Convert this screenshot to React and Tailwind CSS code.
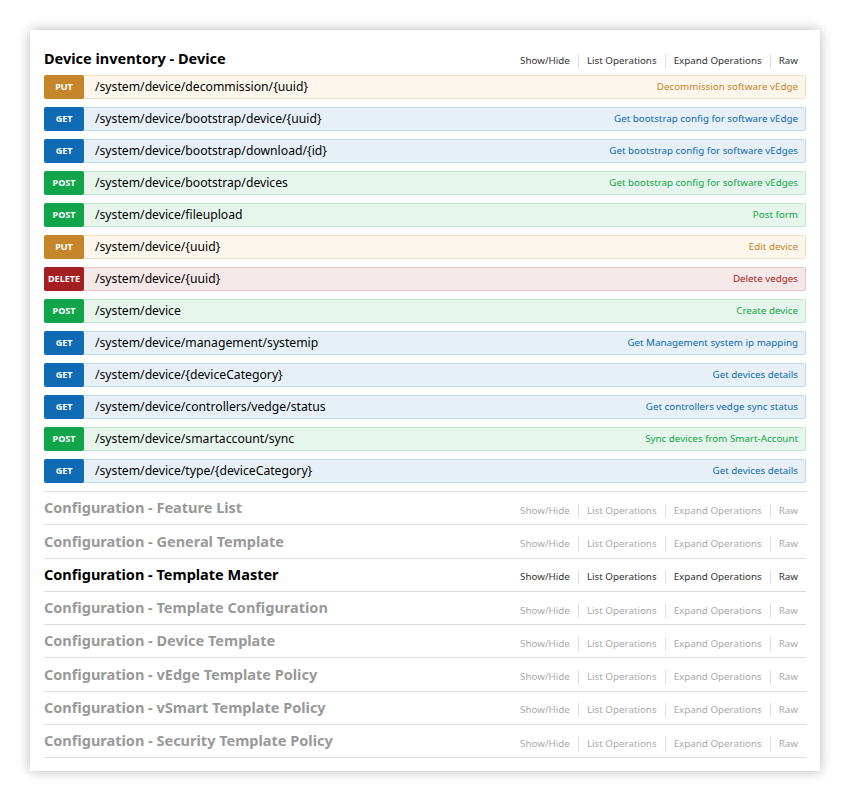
const ops = [
  ['PUT', '/system/device/decommission/{uuid}', 'Decommission software vEdge'],
  ['GET', '/system/device/bootstrap/device/{uuid}', 'Get bootstrap config for software vEdge'],
  ['GET', '/system/device/bootstrap/download/{id}', 'Get bootstrap config for software vEdges'],
  ['POST', '/system/device/bootstrap/devices', 'Get bootstrap config for software vEdges'],
  ['POST', '/system/device/fileupload', 'Post form'],
  ['PUT', '/system/device/{uuid}', 'Edit device'],
  ['DELETE', '/system/device/{uuid}', 'Delete vedges'],
  ['POST', '/system/device', 'Create device'],
  ['GET', '/system/device/management/systemip', 'Get Management system ip mapping'],
  ['GET', '/system/device/{deviceCategory}', 'Get devices details'],
  ['GET', '/system/device/controllers/vedge/status', 'Get controllers vedge sync status'],
  ['POST', '/system/device/smartaccount/sync', 'Sync devices from Smart-Account'],
  ['GET', '/system/device/type/{deviceCategory}', 'Get devices details'],
];

const styles = {
  GET: { row: 'bg-[#e7f0f7] border-[#c3d9ec]', badge: 'bg-[#0f6ab4] border-[#0f6ab4]', text: 'text-[#0f6ab4]' },
  POST: { row: 'bg-[#e7f6ec] border-[#c3e8d1]', badge: 'bg-[#10a54a] border-[#10a54a]', text: 'text-[#10a54a]' },
  PUT: { row: 'bg-[#fcf6ed] border-[#f0e1c5]', badge: 'bg-[#c5862b] border-[#c5862b]', text: 'text-[#c5862b]' },
  DELETE: { row: 'bg-[#f5e8e8] border-[#e8c6c7]', badge: 'bg-[#a41e22] border-[#a41e22]', text: 'text-[#a41e22]' },
};

const sections = [
  ['Configuration - Feature List', false],
  ['Configuration - General Template', false],
  ['Configuration - Template Master', true],
  ['Configuration - Template Configuration', false],
  ['Configuration - Device Template', false],
  ['Configuration - vEdge Template Policy', false],
  ['Configuration - vSmart Template Policy', false],
  ['Configuration - Security Template Policy', false],
];

function Links({ active }) {
  const items = ['Show/Hide', 'List Operations', 'Expand Operations', 'Raw'];
  return (
    <ul className={`flex items-center mt-[5px] text-[9.8px] ${active ? 'text-[#333]' : 'text-[#aaa]'}`}>
      {items.map((it, i) => (
        <li key={it} className={`px-[8px] leading-[14px] ${i > 0 ? 'border-l border-[#ddd]' : ''} ${i === items.length - 1 ? 'pr-0' : ''}`}>
          {it}
        </li>
      ))}
    </ul>
  );
}

function Row({ method, path, summary }) {
  const s = styles[method];
  return (
    <li className={`flex h-6 mb-2 border rounded-[2px] ${s.row}`}>
      <span className={`w-[40px] -m-px h-6 shrink-0 flex items-center justify-center rounded-[2px] text-white text-[9px] font-bold uppercase ${s.badge}`}>
        {method}
      </span>
      <span className="pl-[12px] flex items-center text-[12.2px] text-black">{path}</span>
      <span className={`ml-auto pr-[7px] flex items-center text-[9.8px] ${s.text}`}>{summary}</span>
    </li>
  );
}

export default function App() {
  return (
    <div className="bg-white p-[30px] font-['Noto_Sans',sans-serif]">
      <div className="bg-white shadow-[0_0_12px_rgba(0,0,0,0.28)] px-[14px] pt-3 pb-[13px]">
        <div className="border-b border-[#ddd]">
          <div className="h-[33px] flex items-center justify-between">
            <h2 className="text-[14.5px] font-bold text-black">Device inventory - Device</h2>
            <div className="pr-[8px]"><Links active /></div>
          </div>
          <ul>
            {ops.map((o, i) => (
              <Row key={i} method={o[0]} path={o[1]} summary={o[2]} />
            ))}
          </ul>
        </div>
        {sections.map(([name, active]) => (
          <div key={name} className="h-[33.3px] border-b border-[#ddd] flex items-center justify-between">
            <h2 className={`text-[14.5px] font-bold ${active ? 'text-black' : 'text-[#999]'}`}>{name}</h2>
            <div className="pr-[8px]"><Links active={active} /></div>
          </div>
        ))}
      </div>
    </div>
  );
}
